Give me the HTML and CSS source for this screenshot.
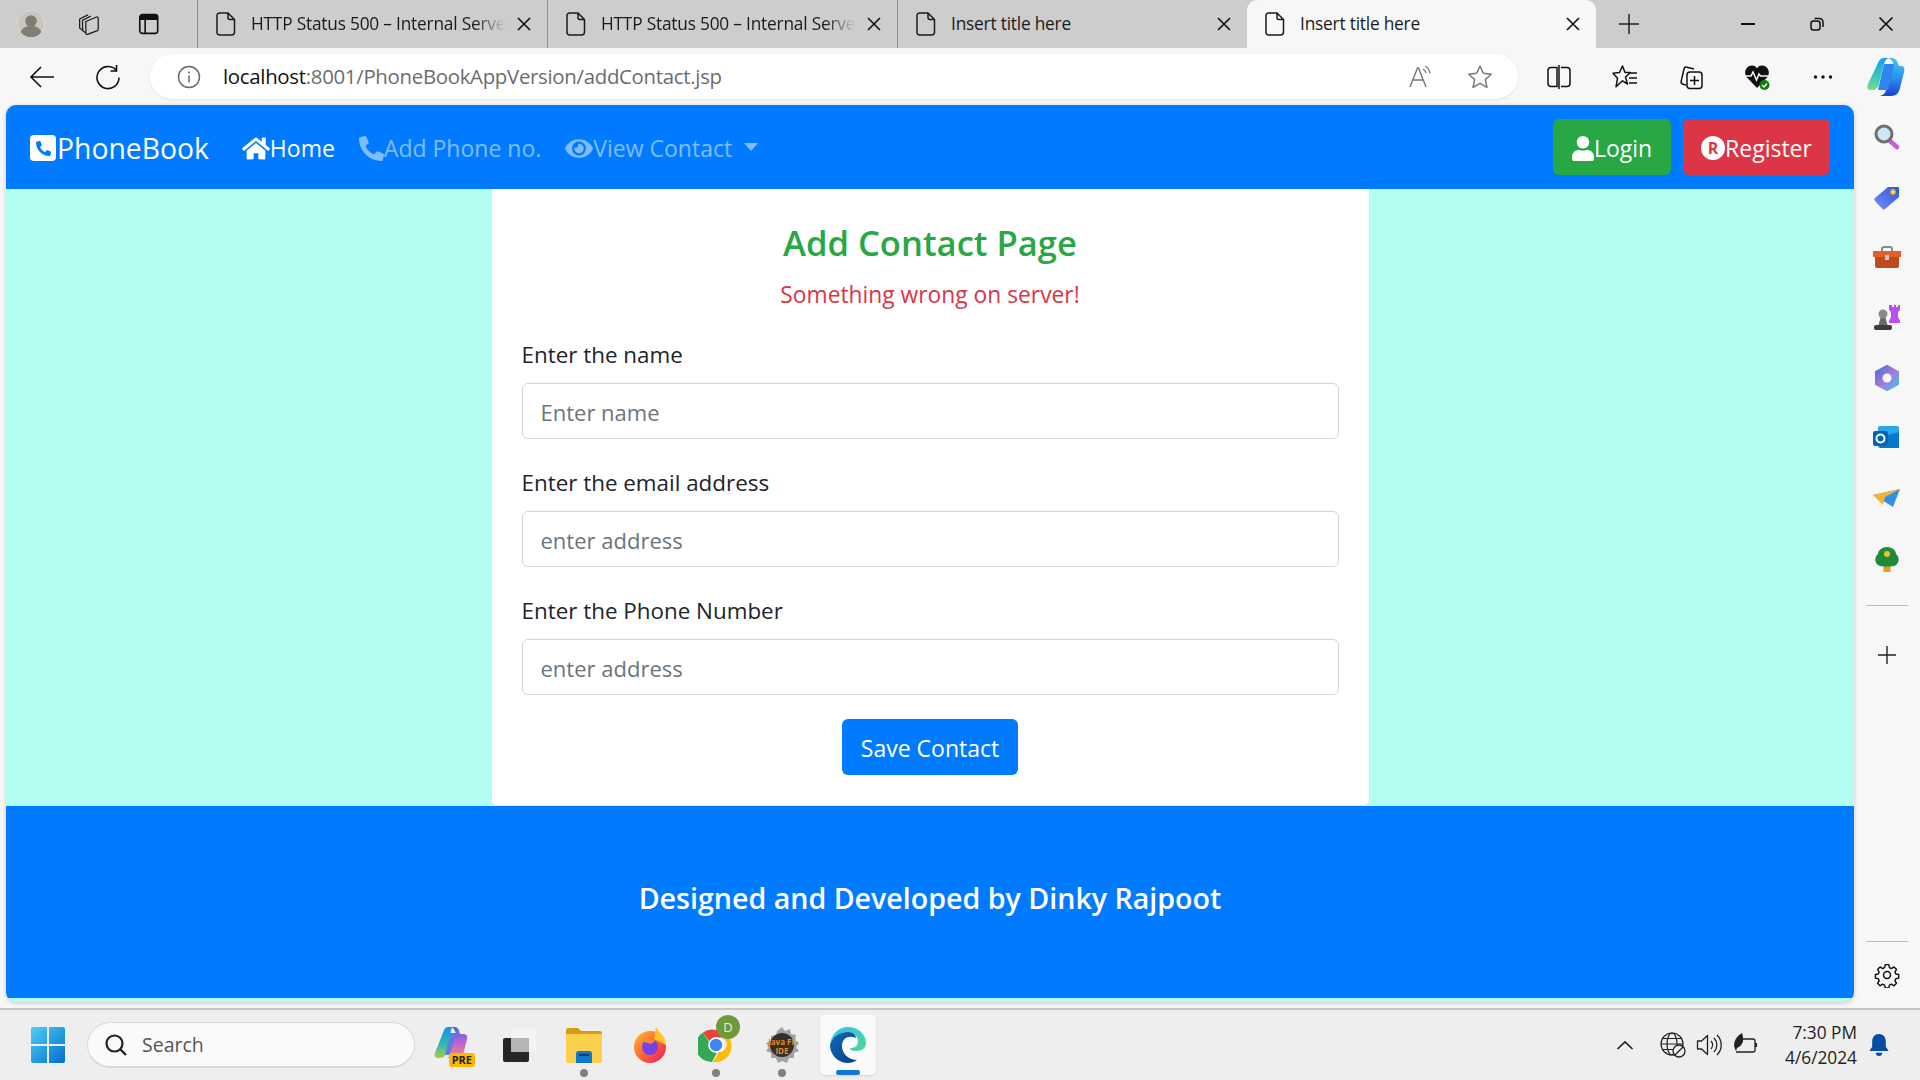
FILE: index.html
```html
<!DOCTYPE html>
<html lang="en">

<head>
	<meta charset="UTF-8">
	<meta name="viewport" content="width=device-width, initial-scale=1.0">
	<title>Insert title here</title>
	<link rel="stylesheet" href="styles.css">
</head>

<body>
	<svg class="defs" aria-hidden="true">
		<symbol id="i-file" viewBox="0 0 20 24">
			<path d="M3.5 1h8.5l6.5 6.5V20a3 3 0 0 1-3 3h-12a2.5 2.5 0 0 1-2.5-2.5V3.5a2.5 2.5 0 0 1 2.5-2.5zM12 1v4.5a2 2 0 0 0 2 2h4.5" fill="none" stroke="#1a1a1a" stroke-width="1.5" />
		</symbol>
		<symbol id="i-close" viewBox="0 0 14 14">
			<path d="M1 1l12 12M13 1L1 13" fill="none" stroke="#111" stroke-width="1.6" />
		</symbol>
		<symbol id="i-phone" viewBox="0 0 512 512">
			<path d="M497.39 361.8l-112-48a24 24 0 0 0-28 6.9l-49.6 60.6A370.66 370.66 0 0 1 130.6 204.11l60.6-49.6a23.94 23.94 0 0 0 6.9-28l-48-112A24.16 24.16 0 0 0 122.6.61l-104 24A24 24 0 0 0 0 48c0 256.5 207.9 464 464 464a24 24 0 0 0 23.4-18.6l24-104a24.29 24.29 0 0 0-14.01-27.6z" />
		</symbol>
	</svg>

	<!-- tab strip -->
	<div class="tabstrip">
		<div class="strip-left">
			<svg class="avatar" viewBox="0 0 34 34">
				<circle cx="17" cy="17" r="16.5" fill="#c9c6bd" stroke="#dcdad2" />
				<circle cx="17" cy="13.5" r="7" fill="#817c74" />
				<path d="M4.5 27c2-6 7-7.5 12.5-7.5s10.5 1.5 12.5 7.5a16 16 0 0 1-25 0z" fill="#817c74" />
			</svg>
			<svg class="strip-icon" viewBox="0 0 26 26">
				<g fill="none" stroke="#1a1a1a" stroke-width="1.5" stroke-linejoin="round">
					<path d="M6 21L2 18V7l10-5" />
					<path d="M9 23.5L5.5 21V8.5l10-5" />
					<path d="M9.5 10l13-5.5a1.5 1.5 0 0 1 2 1.5v13.5a2 2 0 0 1-1 1.5l-12 4.5a1.5 1.5 0 0 1-2-1.5z" />
				</g>
			</svg>
			<svg class="strip-icon" viewBox="0 0 24 26">
				<rect x="2" y="2.5" width="20" height="21" rx="3" fill="none" stroke="#111" stroke-width="1.8" />
				<path d="M2 4.5a2 2 0 0 1 2-2h16a2 2 0 0 1 2 2v4H2z" fill="#111" />
				<path d="M8 8v15" stroke="#111" stroke-width="1.8" />
			</svg>
		</div>
		<div class="tab">
			<svg class="tab-file"><use href="#i-file" /></svg>
			<span class="tab-title tab-title-fade">HTTP Status 500 – Internal Server Error</span>
			<svg class="tab-close"><use href="#i-close" /></svg>
		</div>
		<div class="tab">
			<svg class="tab-file"><use href="#i-file" /></svg>
			<span class="tab-title tab-title-fade">HTTP Status 500 – Internal Server Error</span>
			<svg class="tab-close"><use href="#i-close" /></svg>
		</div>
		<div class="tab">
			<svg class="tab-file"><use href="#i-file" /></svg>
			<span class="tab-title">Insert title here</span>
			<svg class="tab-close"><use href="#i-close" /></svg>
		</div>
		<div class="tab tab-active">
			<svg class="tab-file"><use href="#i-file" /></svg>
			<span class="tab-title">Insert title here</span>
			<svg class="tab-close"><use href="#i-close" /></svg>
		</div>
		<svg class="new-tab" viewBox="0 0 22 22">
			<path d="M11 1v20M1 11h20" stroke="#222" stroke-width="1.5" />
		</svg>
		<div class="window-btns">
			<svg class="win-btn" viewBox="0 0 18 18"><path d="M2 9h14" stroke="#111" stroke-width="2" /></svg>
			<svg class="win-btn" viewBox="0 0 18 18">
				<rect x="3" y="6" width="9" height="9" rx="2.5" fill="none" stroke="#111" stroke-width="1.5" />
				<path d="M6.5 3.5h5a3.5 3.5 0 0 1 3.5 3.5v5" fill="none" stroke="#111" stroke-width="1.5" />
			</svg>
			<svg class="win-btn" viewBox="0 0 18 18"><path d="M2.5 2.5l13 13M15.5 2.5l-13 13" stroke="#111" stroke-width="1.7" /></svg>
		</div>
	</div>

	<!-- address bar row -->
	<div class="toolbar">
		<div class="nav-btns">
			<svg class="tool-icon" viewBox="0 0 26 26"><path d="M25 13H2M12 3L2 13l10 10" fill="none" stroke="#111" stroke-width="1.6" /></svg>
			<svg class="tool-icon" viewBox="0 0 26 26"><path d="M21 6a11 11 0 1 0 3 7.5M21.5 1v6h-6" fill="none" stroke="#111" stroke-width="1.6" /></svg>
		</div>
		<div class="addressbar">
			<svg class="info-icon" viewBox="0 0 24 24">
				<circle cx="12" cy="12" r="10.5" fill="none" stroke="#666" stroke-width="1.4" />
				<path d="M12 10.5v7" stroke="#666" stroke-width="1.5" />
				<circle cx="12" cy="7.5" r="1" fill="#666" />
			</svg>
			<div class="url"><span class="url-host">localhost</span>:8001/PhoneBookAppVersion/addContact.jsp</div>
			<svg class="addr-icon" viewBox="0 0 26 26">
				<path d="M2 23L9.5 4h1L18 23M5 16h10" fill="none" stroke="#777" stroke-width="1.4" />
				<path d="M15 5a6 6 0 0 1 3 4M17 2a10 10 0 0 1 5 7.5" fill="none" stroke="#777" stroke-width="1.3" />
			</svg>
			<svg class="addr-icon" viewBox="0 0 26 26">
				<path d="M13 2l3.3 7.3 8 .9-6 5.3 1.7 7.8-7-4-7 4 1.7-7.8-6-5.3 8-.9z" fill="none" stroke="#777" stroke-width="1.5" stroke-linejoin="round" />
			</svg>
		</div>
		<div class="tool-right">
			<svg class="tool-icon" viewBox="0 0 26 26">
				<path d="M11 3.5H5a3 3 0 0 0-3 3v13a3 3 0 0 0 3 3h6zM15 3.5h6a3 3 0 0 1 3 3v13a3 3 0 0 1-3 3h-6M13 1v24" fill="none" stroke="#111" stroke-width="1.5" />
			</svg>
			<svg class="tool-icon" viewBox="0 0 26 26">
				<path d="M10.5 2l2.5 6.5h5.5l-5 4.5 2 7-5-3.2-6.5 6 1.5-8.5-4.5-5 6.5-.8z" fill="none" stroke="#111" stroke-width="1.5" stroke-linejoin="round" />
				<path d="M18 9h7M17 14h8M17 19h8" stroke="#111" stroke-width="1.5" />
			</svg>
			<svg class="tool-icon" viewBox="0 0 26 26">
				<path d="M8 21l-3-.8a2.5 2.5 0 0 1-1.8-3L6 5a2.5 2.5 0 0 1 3-1.8l7 1.8" fill="none" stroke="#111" stroke-width="1.5" />
				<rect x="9" y="8" width="15" height="16.5" rx="3" fill="none" stroke="#111" stroke-width="1.5" />
				<path d="M16.5 12v9M12 16.5h9" stroke="#111" stroke-width="1.5" />
			</svg>
			<svg class="tool-icon" viewBox="0 0 26 26">
				<path d="M13 24L2.5 13C-1 7 3 1.5 8 1.5c2.5 0 4 1 5 3 1-2 2.5-3 5-3 5 0 9 5.5 5.5 11.5z" fill="#111" />
				<path d="M1 12h6l2-4 3.5 8 2.5-6 1.5 2h9" fill="none" stroke="#f7f7f7" stroke-width="1.5" />
				<circle cx="20.5" cy="21" r="5" fill="#107c10" />
				<path d="M18 21l2 2 3-3.5" fill="none" stroke="#fff" stroke-width="1.2" />
			</svg>
			<svg class="tool-icon" viewBox="0 0 26 26"><circle cx="5.5" cy="13" r="1.7" fill="#111" /><circle cx="13" cy="13" r="1.7" fill="#111" /><circle cx="20.5" cy="13" r="1.7" fill="#111" /></svg>
			<svg class="copilot" viewBox="0 0 38 40">
				<defs>
					<linearGradient id="cp1" x1="0" y1="0" x2="0" y2="1"><stop offset="0" stop-color="#1e9be8" /><stop offset=".6" stop-color="#38c9c0" /><stop offset="1" stop-color="#7ed88a" /></linearGradient>
					<linearGradient id="cp2" x1="0" y1="0" x2="0" y2="1"><stop offset="0" stop-color="#45c4f5" /><stop offset=".55" stop-color="#2a8ef0" /><stop offset="1" stop-color="#1a3fd0" /></linearGradient>
				</defs>
				<path d="M17 7h11l-6 26H11z" fill="#2f86ee" />
				<path d="M11 6c1-3 3-5 6-5h6c-3 0-5 2-6 6l-5 20c-1 4-3 6-7 6H3c-3 0-3-3-2-6z" fill="url(#cp1)" />
				<path d="M21 1h4c3 0 5 2 6 6l1 2h2c3 0 4 3 3 6l-4 16c-1 5-4 8-9 8H11c4 0 7-2 8-6h2l6-24C26 4 24 2 21 1z" fill="url(#cp2)" />
			</svg>
		</div>
	</div>

	<div class="browser">
		<div class="page">
			<nav class="navbar">
				<a class="brand">
					<svg class="brand-icon" viewBox="0 0 26 26">
						<rect width="26" height="26" rx="4" fill="#fff" />
						<use href="#i-phone" x="6" y="6" width="15" height="15" fill="#007bff" />
					</svg>
					PhoneBook
				</a>
				<ul class="nav-links">
					<li class="nav-item nav-item-active">
						<svg class="nav-icon nav-icon-wide" viewBox="0 0 576 512"><path fill="currentColor" d="M280.37 148.26L96 300.11V464a16 16 0 0 0 16 16l112.06-.29a16 16 0 0 0 15.92-16V368a16 16 0 0 1 16-16h64a16 16 0 0 1 16 16v95.64a16 16 0 0 0 16 16.05L464 480a16 16 0 0 0 16-16V300L295.67 148.26a12.19 12.19 0 0 0-15.3 0zM571.6 251.47L488 182.56V44.05a12 12 0 0 0-12-12h-56a12 12 0 0 0-12 12v72.61L318.47 43a48 48 0 0 0-61 0L4.34 251.47a12 12 0 0 0-1.6 16.9l25.5 31A12 12 0 0 0 45.15 301l235.22-193.74a12.19 12.19 0 0 1 15.3 0L530.9 301a12 12 0 0 0 16.9-1.6l25.5-31a12 12 0 0 0-1.7-16.93z" /></svg>
						Home
					</li>
					<li class="nav-item">
						<svg class="nav-icon"><use href="#i-phone" fill="currentColor" /></svg>
						Add Phone no.
					</li>
					<li class="nav-item">
						<svg class="nav-icon nav-icon-wide" viewBox="0 0 576 512"><path fill="currentColor" d="M572.52 241.4C518.29 135.59 410.93 64 288 64S57.68 135.64 3.48 241.41a32.35 32.35 0 0 0 0 29.19C57.71 376.41 165.07 448 288 448s230.32-71.64 284.52-177.41a32.35 32.35 0 0 0 0-29.19zM288 400a144 144 0 1 1 144-144 143.93 143.93 0 0 1-144 144zm0-240a95.31 95.31 0 0 0-25.31 3.79 47.85 47.85 0 0 1-66.9 66.9A95.78 95.78 0 1 0 288 160z" /></svg>
						View Contact
						<span class="caret"></span>
					</li>
				</ul>
				<div class="nav-actions">
					<a class="btn btn-success">
						<svg class="btn-icon" viewBox="0 0 448 512"><path fill="currentColor" d="M224 256c70.7 0 128-57.3 128-128S294.7 0 224 0 96 57.3 96 128s57.3 128 128 128zm89.6 32h-16.7c-22.2 10.2-46.9 16-72.9 16s-50.6-5.8-72.9-16h-16.7C60.2 288 0 348.2 0 422.4V464c0 26.5 21.5 48 48 48h352c26.5 0 48-21.5 48-48v-41.6c0-74.2-60.2-134.4-134.4-134.4z" /></svg>
						Login
					</a>
					<a class="btn btn-danger">
						<span class="reg-mark">R</span>
						Register
					</a>
				</div>
			</nav>

			<main class="content">
				<div class="card">
					<h3 class="card-title">Add Contact Page</h3>
					<p class="error-msg">Something wrong on server!</p>
					<form>
						<div class="form-group">
							<label for="name">Enter the name</label>
							<input id="name" class="form-control" type="text" placeholder="Enter name">
						</div>
						<div class="form-group">
							<label for="email">Enter the email address</label>
							<input id="email" class="form-control" type="text" placeholder="enter address">
						</div>
						<div class="form-group">
							<label for="phone">Enter the Phone Number</label>
							<input id="phone" class="form-control" type="text" placeholder="enter address">
						</div>
						<div class="form-submit">
							<button class="btn btn-primary" type="button">Save Contact</button>
						</div>
					</form>
				</div>
			</main>

			<footer class="footer">Designed and Developed by Dinky Rajpoot</footer>
		</div>

		<!-- edge sidebar -->
		<aside class="sidebar">
			<div class="side-apps">
				<svg class="side-icon" viewBox="0 0 28 28">
					<path d="M17 18l7 6" stroke="#c85ae0" stroke-width="4.5" stroke-linecap="round" />
					<circle cx="11" cy="11" r="8" fill="#cfe6f5" stroke="#707070" stroke-width="3" />
				</svg>
				<svg class="side-icon" viewBox="0 0 28 28">
					<defs><linearGradient id="tag" x1="0" y1="1" x2="1" y2="0"><stop offset="0" stop-color="#7a8cf5" /><stop offset="1" stop-color="#2b58e0" /></linearGradient></defs>
					<path d="M2 15L15 4h10a1 1 0 0 1 1 1v9L12 26a2 2 0 0 1-2.5 0L2 18a2 2 0 0 1 0-3z" fill="url(#tag)" />
					<circle cx="20" cy="9" r="2.5" fill="#f4d35e" stroke="#d9a520" />
				</svg>
				<svg class="side-icon" viewBox="0 0 28 28">
					<path d="M9 8V5a2 2 0 0 1 2-2h6a2 2 0 0 1 2 2v3" fill="none" stroke="#8a8a8a" stroke-width="2" />
					<path d="M0 7h28v6H0z" fill="#e2602a" />
					<path d="M2 13h24v9a2 2 0 0 1-2 2H4a2 2 0 0 1-2-2z" fill="#bf4a1d" />
					<rect x="12" y="11" width="4" height="5" fill="#c9c9c9" />
				</svg>
				<svg class="side-icon" viewBox="0 0 28 28">
					<path d="M17 1h2v2h2V1h2v2h2V1h2v5l-2 2v5l2 4v2H16v-2l2-4V8l-2-2V1z" fill="#b94ff0" />
					<circle cx="10" cy="10" r="4.5" fill="#8a8a8a" />
					<path d="M7.5 14h5l2 7h-9z" fill="#6a6a6a" />
					<rect x="1" y="21" width="18" height="5" rx="2" fill="#3d3d3d" />
				</svg>
				<svg class="side-icon" viewBox="0 0 28 28">
					<defs><linearGradient id="m365" x1="0" y1="0" x2="1" y2="1"><stop offset="0" stop-color="#3a6fd8" /><stop offset=".5" stop-color="#a878d8" /><stop offset="1" stop-color="#3ec3ee" /></linearGradient></defs>
					<path d="M14 2l11 6v12l-11 6L3 20V8z" fill="url(#m365)" stroke="url(#m365)" stroke-width="2" stroke-linejoin="round" />
					<circle cx="14" cy="14" r="4.5" fill="#f7f7f7" />
				</svg>
				<svg class="side-icon" viewBox="0 0 28 28">
					<rect x="5" y="2" width="21" height="22" rx="2" fill="#28a8ea" />
					<path d="M5 14l21-6v16H7z" fill="#0a78c8" />
					<rect x="0" y="7" width="15" height="15" rx="2" fill="#0464b8" />
					<circle cx="7.5" cy="14.5" r="4" fill="none" stroke="#fff" stroke-width="2" />
				</svg>
				<svg class="side-icon" viewBox="0 0 28 28">
					<path d="M0 10l27-6-7 18-8-5z" fill="#2f8fea" />
					<path d="M0 10l27-6-15 8-2 8z" fill="#f5b335" />
				</svg>
				<svg class="side-icon" viewBox="0 0 28 28">
					<rect x="10.5" y="20" width="7" height="7" fill="#e89a1c" />
					<path d="M14 2c6 0 9 4 9 7 3 2 4 8 0 11-3 2-15 2-18 0-4-3-3-9 0-11 0-3 3-7 9-7z" fill="#1f8a3b" />
					<circle cx="14" cy="9" r="3" fill="#f0c020" />
				</svg>
				<div class="side-divider"></div>
				<svg class="side-plus" viewBox="0 0 20 20"><path d="M10 1v18M1 10h18" stroke="#222" stroke-width="1.4" /></svg>
			</div>
			<div class="side-bottom">
				<div class="side-divider"></div>
				<svg class="side-gear" viewBox="0 0 26 26">
					<path d="M11 1.5h4l.7 3.3 2.2 1 2.9-1.8 2.8 2.8-1.8 2.9 1 2.2 3.2.6v4l-3.2.7-1 2.2 1.8 2.8-2.8 2.8-2.9-1.8-2.2 1-.7 3.3h-4l-.6-3.3-2.3-1-2.8 1.8-2.8-2.8 1.8-2.8-1-2.2-3.2-.7v-4l3.2-.6 1-2.2-1.8-2.9 2.8-2.8 2.8 1.8 2.3-1z" transform="translate(1.3 1.3) scale(.9)" fill="none" stroke="#111" stroke-width="1.6" stroke-linejoin="round" />
					<circle cx="13" cy="13" r="3.5" fill="none" stroke="#111" stroke-width="1.5" />
				</svg>
			</div>
		</aside>
	</div>

	<!-- windows taskbar -->
	<div class="taskbar">
		<svg class="start" viewBox="0 0 34 36">
			<defs><linearGradient id="win" x1="0" y1="0" x2="1" y2="1"><stop offset="0" stop-color="#4fcdf7" /><stop offset="1" stop-color="#0070cc" /></linearGradient></defs>
			<path d="M0 2a2 2 0 0 1 2-2h14v17H0zM18 0h14a2 2 0 0 1 2 2v15H18zM0 19h16v17H2a2 2 0 0 1-2-2zM18 19h16v15a2 2 0 0 1-2 2H18z" fill="url(#win)" />
		</svg>
		<div class="searchbox">
			<svg class="search-icon" viewBox="0 0 24 24">
				<circle cx="10.5" cy="10.5" r="8" fill="none" stroke="#222" stroke-width="2.2" />
				<path d="M16 16l6 6" stroke="#222" stroke-width="2.4" />
			</svg>
			Search
		</div>
		<div class="task-icons">
			<div class="task-item">
				<svg class="task-svg" viewBox="0 0 36 36">
					<defs>
						<linearGradient id="cop-a" x1="0" y1="0" x2="0" y2="1"><stop offset="0" stop-color="#1e90e8" /><stop offset=".55" stop-color="#2fb8b0" /><stop offset="1" stop-color="#a8d040" /></linearGradient>
						<linearGradient id="cop-b" x1="0" y1="0" x2="0" y2="1"><stop offset="0" stop-color="#3b6fe0" /><stop offset=".5" stop-color="#c060d8" /><stop offset="1" stop-color="#f08a70" /></linearGradient>
					</defs>
					<path d="M16 6h10l-6 22H9z" fill="#5a7ee0" />
					<path d="M10 3c1-2 2-3 4-3h4l-7 28c-1 2-2 3-5 3H4c-3 0-4-2-3-5z" fill="url(#cop-a)" />
					<path d="M17 0h4c2 0 3 1 4 4l1 3h3c3 0 5 2 4 5l-4 16c-1 2-3 3-5 3H12c2 0 3-1 4-4l6-19c0-3-2-7-5-8z" fill="url(#cop-b)" />
				</svg>
				<span class="pre-badge">PRE</span>
			</div>
			<div class="task-item">
				<svg class="task-svg" viewBox="0 0 36 36">
					<rect x="3" y="11" width="26" height="24" rx="2" fill="#262626" />
					<rect x="11" y="1" width="26" height="24" rx="2" fill="#f3f3f3" opacity=".85" />
					<rect x="11" y="11" width="18" height="14" fill="#b5b5b5" />
				</svg>
			</div>
			<div class="task-item task-running">
				<svg class="task-svg" viewBox="0 0 36 36">
					<path d="M0 3a2 2 0 0 1 2-2h10l3 3h19a2 2 0 0 1 2 2v3H0z" fill="#d99a10" />
					<path d="M0 7h36v27a2 2 0 0 1-2 2H2a2 2 0 0 1-2-2z" fill="#fbd04d" />
					<path d="M10 36v-9a3 3 0 0 1 3-3h10a3 3 0 0 1 3 3v9z" fill="#0f78c8" />
					<path d="M13 28h10" stroke="#063e70" stroke-width="2" />
				</svg>
			</div>
			<div class="task-item">
				<svg class="task-svg" viewBox="0 0 36 36">
					<defs><linearGradient id="ff" x1="0" y1="0" x2="1" y2="1"><stop offset="0" stop-color="#ffbd2e" /><stop offset=".6" stop-color="#ff5630" /><stop offset="1" stop-color="#e3177b" /></linearGradient></defs>
					<circle cx="18" cy="20" r="16" fill="url(#ff)" />
					<path d="M24 0c2 5 10 8 10 18L22 12z" fill="#ffc52e" />
					<circle cx="18" cy="20" r="8" fill="#7542e5" />
					<path d="M10 14c4-3 10-3 13 0l-4 3z" fill="#ff8a30" />
				</svg>
			</div>
			<div class="task-item task-running">
				<svg class="task-svg" viewBox="0 0 36 36">
					<path d="M18 3a15 15 0 0 1 13 7.5H18a7.5 7.5 0 0 0-6.5 4L5 5.5A15 15 0 0 1 18 3z" fill="#ea4335" />
					<path d="M5 5.5l7 11a7.5 7.5 0 0 0 7 9l-5 9.5A16 16 0 0 1 5 5.5z" fill="#34a853" />
					<path d="M31 10.5A16 16 0 0 1 15 35l6-10a7.5 7.5 0 0 0 3-14.5z" fill="#fbbc04" />
					<circle cx="18" cy="18" r="7" fill="#4285f4" stroke="#fff" stroke-width="1.5" />
				</svg>
				<span class="profile-badge">D</span>
			</div>
			<div class="task-item task-running">
				<svg class="task-svg" viewBox="0 0 36 36">
					<path d="M18 0l3 4 5-2 1 5 5 1-1 5 4 3-3 4 3 4-5 2 0 5-5 0-2 5-5-2-4 2-2-5-5 0 0-5-5-2 3-4-3-4 5-2 0-5 5-1 1-4z" fill="#a2a2a2" />
					<circle cx="18" cy="18" r="12" fill="#33302e" />
				</svg>
				<span class="ide-label">Java FF<br>IDE</span>
			</div>
			<div class="task-item task-active">
				<svg class="task-svg" viewBox="0 0 36 36">
					<defs>
						<linearGradient id="edge" x1="0" y1="0" x2="1" y2="1"><stop offset="0" stop-color="#2ec4e4" /><stop offset="1" stop-color="#52d69a" /></linearGradient>
						<linearGradient id="edge2" x1="0" y1="0" x2="1" y2="1"><stop offset="0" stop-color="#0f6cbd" /><stop offset="1" stop-color="#0a3c80" /></linearGradient>
					</defs>
					<path d="M18 0c10 0 18 7 18 16 0 6-5 8-10 8-4 0-6-1-6-3 4 0 8-1 8-7 0-5-5-9-10-9C9 5 2 10 0 18 1 8 8 0 18 0z" fill="url(#edge)" />
					<path d="M0 18C2 10 9 5 18 5c5 0 8 3 8 6-6-3-14-1-14 8 0 8 7 14 15 14-3 2-6 3-9 3C8 36 0 28 0 18z" fill="url(#edge2)" />
				</svg>
			</div>
		</div>
		<div class="tray">
			<svg class="tray-chevron" viewBox="0 0 18 10"><path d="M1.5 9L9 2l7.5 7" fill="none" stroke="#222" stroke-width="1.7" /></svg>
			<svg class="tray-icon" viewBox="0 0 26 26">
				<g fill="none" stroke="#222" stroke-width="1.2">
					<circle cx="12" cy="12" r="11" />
					<ellipse cx="12" cy="12" rx="5" ry="11" />
					<path d="M1 12h22M2.5 6.5h19M2.5 17.5h12" />
				</g>
				<circle cx="19" cy="19" r="6" fill="#eee" stroke="#222" stroke-width="1.3" />
				<path d="M15 23l8-8" stroke="#222" stroke-width="1.3" />
			</svg>
			<svg class="tray-icon" viewBox="0 0 26 26">
				<path d="M1.5 9h4l6-5.5v19l-6-5.5h-4z" fill="none" stroke="#222" stroke-width="1.3" stroke-linejoin="round" />
				<path d="M15 9a6 6 0 0 1 0 8M18 6a10 10 0 0 1 0 14M21 3a14 14 0 0 1 0 20" fill="none" stroke="#222" stroke-width="1.3" />
			</svg>
			<svg class="tray-icon" viewBox="0 0 26 26">
				<path d="M10 7h11a2 2 0 0 1 2 2v9a2 2 0 0 1-2 2H4" fill="none" stroke="#222" stroke-width="1.3" />
				<path d="M23 11h2v4h-2z" fill="#222" />
				<path d="M3 17C0 10 5 4 10 1c2 6 2 12-5 15l-1 3z" fill="#222" />
			</svg>
			<div class="clock">
				<div>7:30 PM</div>
				<div>4/6/2024</div>
			</div>
			<svg class="bell" viewBox="0 0 22 26">
				<path d="M11 1c4.5 0 7.5 3.5 7.5 8v6l3 4.500H.5l3-4.500V9c0-4.500 3-8 7.500-8z" fill="#034ea2" />
				<path d="M7.5 21.5h7a3.5 3.5 0 0 1-7 0z" fill="#034ea2" />
			</svg>
		</div>
	</div>
</body>

</html>
```

FILE: styles.css
```css
* {
	box-sizing: border-box;
}

body {
	margin: 0;
	width: 1920px;
	height: 1080px;
	overflow: hidden;
	display: flex;
	flex-direction: column;
	background: #f7f7f7;
	font-family: 'Open Sans', 'Noto Sans', sans-serif;
	color: #212529;
}

.defs {
	width: 0;
	height: 0;
	position: absolute;
}

/* tab strip */
.tabstrip {
	height: 48px;
	flex: none;
	display: flex;
	background: #cdcdcd;
}

.strip-left {
	width: 197px;
	flex: none;
	display: flex;
	align-items: center;
	padding-left: 17px;
}

.avatar {
	width: 34px;
	height: 34px;
	margin-right: 33px;
}

.strip-icon {
	width: 26px;
	height: 26px;
	margin-right: 38px;
}

.tab {
	width: 350px;
	flex: none;
	display: flex;
	align-items: center;
	padding: 0 16px 0 18px;
	border-left: 1.5px solid #8d8d8d;
}

.tab-file {
	width: 20px;
	height: 24px;
	flex: none;
	margin-right: 15px;
}

.tab-title {
	flex: 1;
	font-size: 17.3px;
	letter-spacing: -.2px;
	white-space: nowrap;
	overflow: hidden;
	color: #1a1a1a;
	line-height: 24px;
}

.tab-title-fade {
	-webkit-mask-image: linear-gradient(90deg, #000 88%, transparent 100%);
	mask-image: linear-gradient(90deg, #000 88%, transparent 100%);
}

.tab-close {
	width: 14px;
	height: 14px;
	flex: none;
	margin-left: 12px;
}

.tab-active {
	border-left: none;
	background: #f7f7f7;
	border-radius: 10px 10px 0 0;
	width: 349px;
}

.new-tab {
	width: 22px;
	height: 22px;
	margin: 13px 0 0 22px;
	flex: none;
}

.window-btns {
	display: flex;
	margin-left: auto;
	padding: 15px 25px 0 0;
	gap: 51px;
}

.win-btn {
	width: 18px;
	height: 18px;
}

/* toolbar */
.toolbar {
	height: 57px;
	flex: none;
	display: flex;
	align-items: center;
	background: #f7f7f7;
}

.nav-btns {
	width: 150px;
	flex: none;
	display: flex;
	padding-left: 29px;
	gap: 40px;
}

.tool-icon {
	width: 26px;
	height: 26px;
	flex: none;
}

.addressbar {
	width: 1368px;
	height: 45px;
	flex: none;
	display: flex;
	align-items: center;
	padding: 0 25px 0 27px;
	background: #fff;
	border-radius: 23px;
	box-shadow: 0 1px 3px rgba(0, 0, 0, 0.08);
}

.info-icon {
	width: 24px;
	height: 24px;
	margin-right: 22px;
	flex: none;
}

.url {
	flex: 1;
	font-size: 20.4px;
	letter-spacing: -.3px;
	color: #6c6c6c;
	margin-top: -2px;
}

.url-host {
	color: #111;
}

.addr-icon {
	width: 26px;
	height: 26px;
	margin-left: 33px;
}

.tool-right {
	display: flex;
	align-items: center;
	padding-left: 28px;
	gap: 40px;
}

.copilot {
	width: 38px;
	height: 40px;
	margin-left: -9px;
}

/* page */
.browser {
	height: 903px;
	flex: none;
	display: flex;
	align-items: flex-start;
}

.page {
	width: 1848px;
	height: 897px;
	margin-left: 6px;
	flex: none;
	display: flex;
	flex-direction: column;
	background: #b2fef3;
	border-radius: 10px;
	overflow: hidden;
	box-shadow: 0 1px 4px rgba(0, 0, 0, 0.2);
}

.navbar {
	height: 84px;
	flex: none;
	display: flex;
	align-items: center;
	padding: 0 24px;
	background: #007bff;
	color: #fff;
}

.brand {
	display: flex;
	align-items: center;
	font-size: 28.3px;
	margin-right: 33px;
	padding-top: 1px;
}

.brand-icon {
	width: 26px;
	height: 26px;
	margin-right: 1px;
}

.nav-links {
	display: flex;
	list-style: none;
	margin: 0;
	padding: 2px 0 0;
	gap: 24px;
	font-size: 23px;
}

.nav-item {
	display: flex;
	align-items: center;
	color: rgba(255, 255, 255, 0.5);
}

.nav-item-active {
	color: #fff;
}

.nav-icon {
	width: 25px;
	height: 25px;
}

.nav-icon-wide {
	width: 28px;
	height: 25px;
}

.caret {
	width: 0;
	height: 0;
	margin-left: 12px;
	border-top: 8px solid;
	border-left: 7.5px solid transparent;
	border-right: 7.5px solid transparent;
	margin-top: -3px;
}

.nav-actions {
	display: flex;
	gap: 12px;
	margin-left: auto;
}

.btn {
	height: 56px;
	display: inline-flex;
	align-items: center;
	justify-content: center;
	padding: 2px 16px 0;
	border: none;
	border-radius: 6px;
	color: #fff;
	font-family: inherit;
	font-size: 23px;
}

.btn-success {
	background: #28a745;
	width: 118px;
}

.btn-danger {
	background: #dc3545;
	width: 147px;
}

.btn-primary {
	background: #007bff;
	width: 176px;
}

.btn-icon {
	width: 22px;
	height: 25px;
}

.reg-mark {
	width: 24px;
	height: 24px;
	flex: none;
	border-radius: 50%;
	background: #fff;
	color: #dc3545;
	font-size: 16px;
	font-weight: 700;
	display: flex;
	align-items: center;
	justify-content: center;
}

.content {
	height: 617px;
	flex: none;
	display: flex;
	justify-content: center;
}

.card {
	width: 879px;
	padding: 30px 30px 0;
	background: #fff;
	border: 1px solid #e3e6e8;
	border-top: none;
	border-radius: 0 0 6px 6px;
}

.card-title {
	margin: 0;
	height: 48px;
	line-height: 48px;
	text-align: center;
	font-size: 34.6px;
	font-weight: 600;
	color: #28a745;
}

.error-msg {
	margin: 11px 0 26px;
	height: 34px;
	line-height: 34px;
	text-align: center;
	font-size: 22.8px;
	color: #dc3545;
}

.form-group {
	margin-bottom: 27px;
}

.form-group label {
	display: block;
	height: 34px;
	line-height: 34px;
	margin-bottom: 11px;
	font-size: 22.4px;
}

.form-control {
	display: block;
	width: 100%;
	height: 56px;
	padding: 2px 18px 0;
	border: 1.5px solid #ced4da;
	border-radius: 6px;
	font-family: inherit;
	font-size: 22px;
	color: #495057;
	background: #fff;
}

.form-control::placeholder {
	color: #6c757d;
	opacity: 1;
}

.form-submit {
	display: flex;
	justify-content: center;
	margin-top: -3px;
}

.footer {
	height: 192px;
	flex: none;
	display: flex;
	align-items: center;
	justify-content: center;
	padding-bottom: 10px;
	background: #007bff;
	color: #fff;
	font-size: 28.6px;
	font-weight: 600;
}

/* edge sidebar */
.sidebar {
	width: 66px;
	height: 903px;
	flex: none;
	display: flex;
	flex-direction: column;
	align-items: center;
	justify-content: space-between;
}

.side-apps {
	display: flex;
	flex-direction: column;
	align-items: center;
	padding-top: 18px;
	gap: 32.3px;
}

.side-icon {
	width: 28px;
	height: 28px;
	flex: none;
}

.side-divider {
	width: 42px;
	height: 1px;
	background: #bdbdbd;
}

.side-plus {
	width: 20px;
	height: 20px;
	margin-top: 6px;
}

.side-bottom {
	display: flex;
	flex-direction: column;
	align-items: center;
	gap: 20px;
	padding-bottom: 20px;
}

.side-gear {
	width: 26px;
	height: 26px;
}

/* taskbar */
.taskbar {
	height: 72px;
	flex: none;
	display: flex;
	align-items: center;
	border-top: 2px solid #c6c6c6;
	background: #eeeeee;
	padding-left: 31px;
}

.start {
	width: 34px;
	height: 36px;
	flex: none;
	margin-right: 22px;
}

.searchbox {
	width: 328px;
	height: 46px;
	flex: none;
	display: flex;
	align-items: center;
	gap: 14px;
	padding-left: 16px;
	background: #fafafa;
	border: 1.5px solid #d8d8d8;
	border-bottom-width: 2px;
	border-radius: 23px;
	font-size: 19.5px;
	color: #555;
}

.search-icon {
	width: 24px;
	height: 24px;
}

.task-icons {
	display: flex;
	align-items: center;
	margin-left: 4px;
}

.task-item {
	width: 66px;
	height: 60px;
	display: flex;
	align-items: center;
	justify-content: center;
	position: relative;
}

.task-svg {
	width: 36px;
	height: 36px;
}

.task-running::after {
	content: "";
	position: absolute;
	bottom: -2px;
	left: 50%;
	width: 8px;
	height: 8px;
	margin-left: -4px;
	border-radius: 50%;
	background: #808080;
}

.task-active {
	background: #fafafa;
	border-radius: 5px;
	box-shadow: 0 1px 2px rgba(0, 0, 0, 0.12);
	width: 56px;
	margin-left: 5px;
}

.task-active::after {
	content: "";
	position: absolute;
	bottom: 0;
	left: 16px;
	width: 24px;
	height: 5px;
	border-radius: 3px;
	background: #0f78d4;
}

.pre-badge {
	position: absolute;
	right: 10px;
	bottom: 8px;
	padding: 0 3px;
	background: #ffb900;
	border-radius: 3px;
	font-size: 11px;
	font-weight: 700;
	line-height: 14px;
	color: #222;
}

.profile-badge {
	position: absolute;
	top: 0;
	right: 9px;
	width: 24px;
	height: 24px;
	border-radius: 50%;
	background: #6f9a3c;
	color: #e8f0d8;
	font-size: 13px;
	text-align: center;
	line-height: 24px;
}

.ide-label {
	position: absolute;
	left: 0;
	right: 0;
	top: 22px;
	text-align: center;
	font-size: 8px;
	line-height: 9px;
	font-weight: 700;
	color: #e88a20;
}

.tray {
	display: flex;
	align-items: center;
	margin-left: auto;
	padding-right: 31px;
}

.tray-chevron {
	width: 18px;
	height: 10px;
	margin-right: 26px;
}

.tray-icon {
	width: 26px;
	height: 26px;
	margin-right: 10px;
}

.clock {
	margin-left: 17px;
	text-align: right;
	font-size: 17.3px;
	line-height: 25px;
	color: #222;
}

.bell {
	width: 20px;
	height: 24px;
	margin-left: 12px;
}
```
